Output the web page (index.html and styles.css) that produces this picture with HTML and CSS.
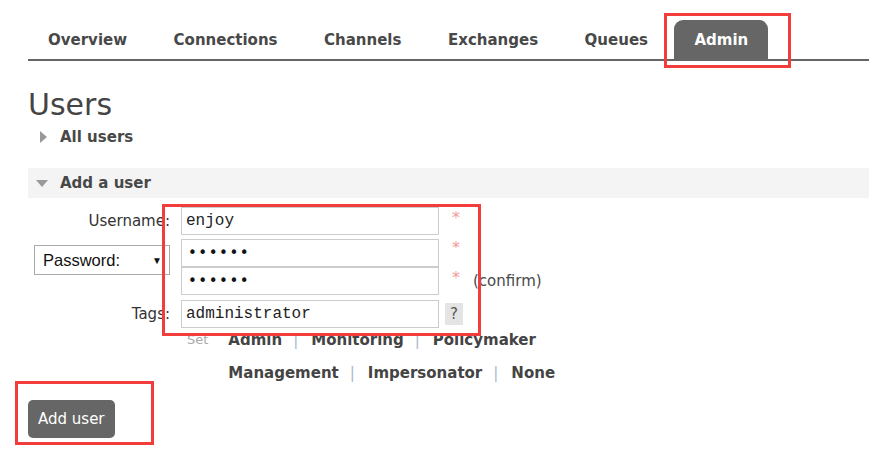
FILE: index.html
```html
<!DOCTYPE html>
<html>
<head>
<meta charset="utf-8">
<link rel="stylesheet" href="styles.css">
</head>
<body>
<div class="page">
  <nav class="tabs">
    <a class="tab">Overview</a>
    <a class="tab">Connections</a>
    <a class="tab">Channels</a>
    <a class="tab">Exchanges</a>
    <a class="tab">Queues</a>
    <a class="tab active">Admin</a>
  </nav>
  <h1 class="title">Users</h1>
  <div class="section"><span class="tri-right"></span>All users</div>
  <div class="section open"><span class="tri-down"></span>Add a user</div>
  <div class="form">
    <label class="lbl">Username:</label>
    <div class="field">enjoy</div>
    <div class="extra"><span class="req">*</span></div>

    <div class="select"><span>Password:</span><span class="arrow">▼</span></div>
    <div class="field pw">••••••</div>
    <div class="extra"><span class="req">*</span></div>

    <div class="field pw second">••••••</div>
    <div class="extra second"><span class="req">*</span><span class="confirm">(confirm)</span></div>

    <label class="lbl tagl">Tags:</label>
    <div class="field tagf">administrator</div>
    <div class="extra tagf"><span class="help">?</span></div>

    <div class="set">
      <span class="setlbl">Set</span>
      <div class="links">
        <div class="linkrow"><b>Admin</b><i>|</i><b>Monitoring</b><i>|</i><b>Policymaker</b></div>
        <div class="linkrow"><b>Management</b><i>|</i><b>Impersonator</b><i>|</i><b>None</b></div>
      </div>
    </div>
  </div>
  <button class="btn">Add user</button>
</div>
<div class="mark m1"></div>
<div class="mark m2"></div>
<div class="mark m3"></div>
</body>
</html>
```
FILE: styles.css
```css
html, body { margin: 0; padding: 0; background: #fff; }
body { font-family: "DejaVu Sans", Verdana, sans-serif; color: #484848; position: relative; width: 869px; height: 459px; overflow: hidden; }
.page { padding: 20px 0 0 28px; }
.tabs { display: flex; gap: 6.5px; border-bottom: 2px solid #666; height: 39px; }
.tab { padding: 2px 20px 0; font-weight: bold; font-size: 15px; line-height: 37px; color: #484848; border-radius: 9px 9px 0 0; }
.tab.active { background: #666; color: #fff; }
.title { font-weight: normal; font-size: 30px; margin: 27px 0 0 0; line-height: 34px; color: #444; }
.section { font-weight: bold; font-size: 15px; height: 30px; line-height: 30px; display: flex; align-items: center; padding-left: 12px; }
.section.open { background: #f4f4f4; margin-top: 16px; }
.tri-right { width: 0; height: 0; border-left: 7px solid #999; border-top: 6px solid transparent; border-bottom: 6px solid transparent; margin: 0 13px 0 0; }
.tri-down { width: 0; height: 0; border-top: 7px solid #999; border-left: 6px solid transparent; border-right: 6px solid transparent; margin: 0 12px 0 -4px; }
.form { display: grid; grid-template-columns: 142px 258px auto; column-gap: 11px; margin-top: 9px; align-items: center; }
.lbl { text-align: right; font-size: 15px; color: #333; }
.field { box-sizing: border-box; height: 28px; border: 1px solid #ccc; font-family: "Liberation Mono", monospace; font-size: 16px; line-height: 26px; padding: 0 4px; color: #222; }
.field.pw { letter-spacing: 1.5px; font-size: 15px; font-family: "DejaVu Sans", sans-serif; color: #111; padding-left: 6px; }
.field.second { grid-column: 2; }
.field.pw:not(.second) { margin-top: 4px; }
.extra { display: flex; align-items: center; padding-left: 2px; }
.extra.tagf { padding-left: 0; margin-left: -5px; }
.req { color: #f49a9a; font-size: 16px; margin-bottom: 8px; }
.confirm { margin-left: 13px; font-size: 15px; color: #484848; }
.select { grid-row: span 2; align-self: start; justify-self: end; margin-top: 10px; box-sizing: border-box; width: 136px; height: 30px; border: 1px solid #aaa; display: flex; align-items: center; justify-content: space-between; padding: 0 7px 0 8px; font-family: "Liberation Sans", Arial, sans-serif; font-size: 16.5px; color: #111; }
.arrow { font-size: 10px; color: #111; }
.tagl, .field.tagf, .extra.tagf { margin-top: 5px; }
.help { background: #e4e4e4; width: 18px; height: 22px; line-height: 22px; text-align: center; font-size: 15px; color: #555; }
.set { grid-column: 2 / 4; display: flex; margin-left: 6px; margin-top: 3px; }
.setlbl { font-size: 13px; color: #aaa; margin-right: 20px; line-height: 18px; }
.links { display: flex; flex-direction: column; gap: 15px; }
.linkrow { display: flex; font-size: 15px; line-height: 18px; font-weight: bold; color: #444; }
.linkrow i { font-style: normal; font-weight: normal; color: #a8b8cc; margin: 0 13px 0 11px; }
.btn { margin-top: 18px; background: #666; color: #fff; border: 0; border-radius: 5px; height: 38px; padding: 0 10px; font-family: "DejaVu Sans", sans-serif; font-size: 15px; }
.mark { position: absolute; border: 3px solid #f33c3c; box-sizing: border-box; }
.m1 { left: 664px; top: 13px; width: 127px; height: 55px; }
.m2 { left: 162px; top: 204px; width: 319px; height: 132px; }
.m3 { left: 15px; top: 381px; width: 139px; height: 64px; }
```
